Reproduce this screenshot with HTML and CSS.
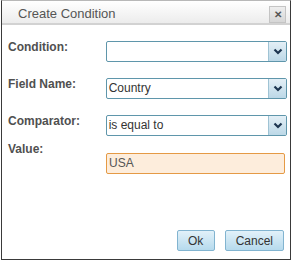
FILE: index.html
```html
<!DOCTYPE html>
<html lang="en">
<head>
    <meta charset="UTF-8">
    <title>Create Condition</title>
    <link rel="stylesheet" href="styles.css">
</head>
<body>
    <div class="dialog">
        <div class="dialog-header">
            <span class="dialog-title">Create Condition</span>
            <span class="close-btn">&#x2715;</span>
        </div>

        <div class="dialog-body">
            <div class="form-row">
                <label>Condition:</label>
                <div class="select-box">
                    <span class="select-text"></span>
                    <span class="select-arrow">
                        <svg width="10" height="7" viewBox="0 0 10 7"><path d="M1.5 1.5 L5 5 L8.5 1.5" fill="none" stroke="#1d3550" stroke-width="2.2"/></svg>
                    </span>
                </div>
            </div>

            <div class="form-row">
                <label>Field Name:</label>
                <div class="select-box">
                    <span class="select-text">Country</span>
                    <span class="select-arrow">
                        <svg width="10" height="7" viewBox="0 0 10 7"><path d="M1.5 1.5 L5 5 L8.5 1.5" fill="none" stroke="#1d3550" stroke-width="2.2"/></svg>
                    </span>
                </div>
            </div>

            <div class="form-row">
                <label>Comparator:</label>
                <div class="select-box">
                    <span class="select-text">is equal to</span>
                    <span class="select-arrow">
                        <svg width="10" height="7" viewBox="0 0 10 7"><path d="M1.5 1.5 L5 5 L8.5 1.5" fill="none" stroke="#1d3550" stroke-width="2.2"/></svg>
                    </span>
                </div>
            </div>

            <div class="value-row">
                <label>Value:</label>
                <div class="value-input">USA</div>
            </div>
        </div>

        <div class="dialog-footer">
            <button class="btn btn-ok">Ok</button>
            <button class="btn">Cancel</button>
        </div>
    </div>
</body>
</html>
```

FILE: styles.css
```css
body {
    margin: 0;
    background-color: white;
    font-family: "Liberation Sans", Arial, sans-serif;
}
.dialog {
    margin-left: 1px;
    width: 290px;
    height: 260px;
    border: 1px solid #3a3a3a;
    border-top-color: #b8b8b8;
    box-sizing: border-box;
    background-color: white;
    display: flex;
    flex-direction: column;
}
.dialog-header {
    height: 22px;
    border-bottom: 2px solid #d2d2d2;
    background: linear-gradient(#ffffff, #ececec);
    display: flex;
    align-items: center;
    padding: 0 4px 0 16px;
    box-sizing: content-box;
}
.dialog-title {
    flex: 1;
    font-size: 13px;
    color: #555;
    padding-top: 3px;
}
.close-btn {
    width: 15px;
    height: 15px;
    margin-top: 4px;
    border: 1px solid #c4c4c4;
    background: linear-gradient(#eeeeee, #d6d6d6);
    color: #555;
    font-size: 10px;
    font-weight: bold;
    line-height: 15px;
    text-align: center;
}
.dialog-body {
    flex: 1;
    padding: 16px 3px 0 6px;
}
.form-row {
    display: flex;
    align-items: flex-start;
    margin-bottom: 16px;
}
label {
    display: block;
    width: 98px;
    margin-top: -1px;
    font-size: 12px;
    line-height: 14px;
    font-weight: bold;
    color: #505050;
}
.select-box {
    width: 182px;
    height: 21px;
    border: 1px solid #5f96ab;
    border-radius: 2px;
    box-sizing: border-box;
    display: flex;
}
.select-text {
    flex: 1;
    padding-left: 2px;
    font-size: 12px;
    line-height: 19px;
    color: #333;
}
.select-arrow {
    width: 17px;
    border-left: 1px solid #9fc3d4;
    background: linear-gradient(#e3eff6, #bcd8e7);
    display: flex;
    align-items: center;
    justify-content: center;
}
.value-row {
    margin-top: -10px;
}
.value-input {
    margin: -3px 0 0 98px;
    width: 179px;
    height: 21px;
    border: 1px solid #e59a45;
    border-radius: 2px;
    box-sizing: border-box;
    background-color: #fdeddc;
    padding-left: 2px;
    font-size: 12px;
    line-height: 19px;
    color: #555;
}
.dialog-footer {
    display: flex;
    justify-content: flex-end;
    gap: 10px;
    padding: 0 6px 8px 0;
}
.btn {
    height: 21px;
    padding: 0 10px;
    border: 1px solid #82b4d0;
    border-radius: 2px;
    background: linear-gradient(#e2f1f9, #b6daed);
    font-family: "Liberation Sans", Arial, sans-serif;
    font-size: 12px;
    color: #333;
}
.btn-ok {
    width: 38px;
}
```
